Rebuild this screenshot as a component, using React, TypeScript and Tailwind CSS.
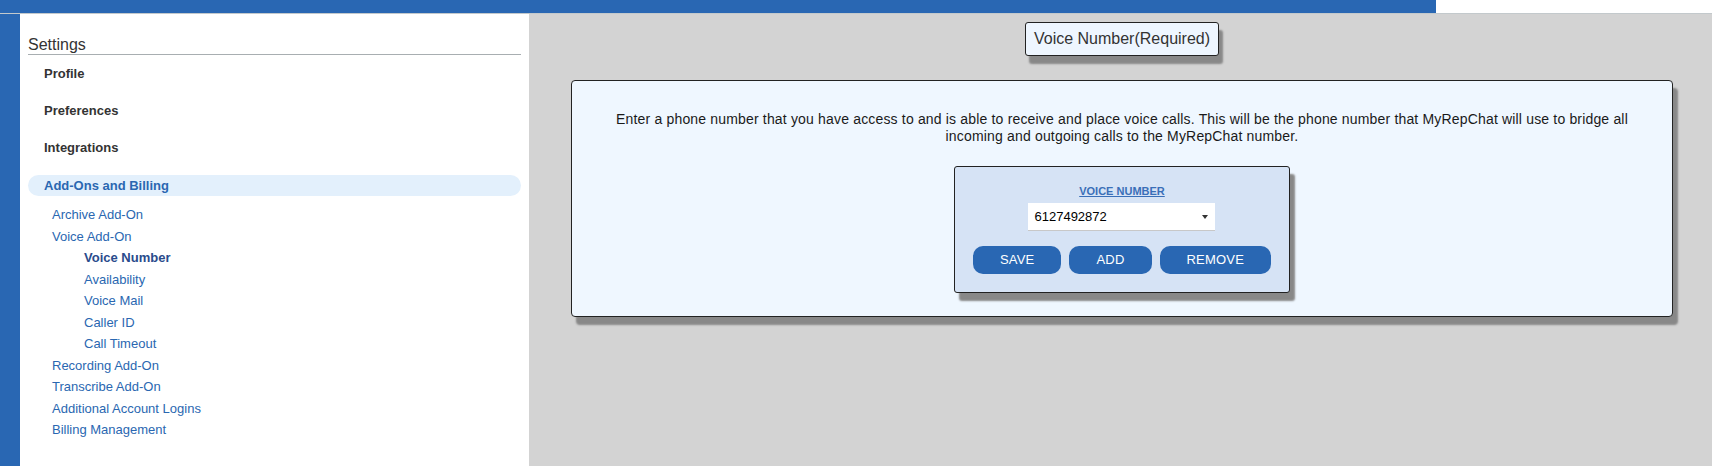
import React from 'react';

const topItems = ['Profile', 'Preferences', 'Integrations'];

const subItems: { label: string; level: number; active?: boolean }[] = [
  { label: 'Archive Add-On', level: 1 },
  { label: 'Voice Add-On', level: 1 },
  { label: 'Voice Number', level: 2, active: true },
  { label: 'Availability', level: 2 },
  { label: 'Voice Mail', level: 2 },
  { label: 'Caller ID', level: 2 },
  { label: 'Call Timeout', level: 2 },
  { label: 'Recording Add-On', level: 1 },
  { label: 'Transcribe Add-On', level: 1 },
  { label: 'Additional Account Logins', level: 1 },
  { label: 'Billing Management', level: 1 },
];

const Sidebar = () => (
  <aside className="w-[509px] shrink-0 bg-white px-[8px] pt-[22px]">
    <div className="text-[16px] leading-[18px] text-[#333] border-b border-[#a8aeb1]">Settings</div>
    <ul>
      {topItems.map((item) => (
        <li key={item} className="h-[37px] flex items-center pl-[16px] text-[13px] font-bold text-[#333]">
          {item}
        </li>
      ))}
      <li className="mt-[9px] h-[21px] flex items-center rounded-full bg-[#e3f0fc] pl-[16px] text-[13px] font-bold text-[#2a67b1]">
        Add-Ons and Billing
      </li>
    </ul>
    <ul className="mt-[8px]">
      {subItems.map(({ label, level, active }) => (
        <li
          key={label}
          className={
            'text-[13px] leading-[21.5px] ' +
            (level === 1 ? 'pl-[24px] ' : 'pl-[56px] ') +
            (active ? 'font-bold text-[#2a4b8c]' : 'text-[#2a67b1]')
          }
        >
          {label}
        </li>
      ))}
    </ul>
  </aside>
);

const VoiceNumberBox = () => (
  <div className="mt-[21px] inline-flex flex-col items-center border border-[#222] rounded-[3px] bg-[#d6e3f5] px-[18px] pt-[18px] pb-[18px] shadow-[5px_8px_2px_#888]">
    <span className="text-[11px] leading-[13px] font-bold text-[#3a6fb8] underline">VOICE NUMBER</span>
    <div className="mt-[5px] h-[28px] w-[187px] bg-white border-b border-[#c8c8c8] pl-[6px] pr-[7px] flex items-center justify-between text-[13px] text-black">
      <span>6127492872</span>
      <span className="w-0 h-0 border-x-[3.5px] border-t-[4px] border-x-transparent border-t-[#333]" />
    </div>
    <div className="mt-[15px] flex gap-[8px]">
      {['SAVE', 'ADD', 'REMOVE'].map((b) => (
        <button
          key={b}
          className="h-[28px] px-[27px] rounded-[10px] bg-[#2967b3] text-white text-[13px] tracking-[0.2px] leading-[28px]"
        >
          {b}
        </button>
      ))}
    </div>
  </div>
);

export default function App() {
  return (
    <div className="h-screen w-full flex flex-col bg-[#d3d3d3] font-['Liberation_Sans',Arial,sans-serif] overflow-hidden">
      <header className="h-[14px] shrink-0 flex border-b border-[#c3c9cc]">
        <div className="w-[1436px] bg-[#2967b3]" />
        <div className="flex-1 bg-white" />
      </header>
      <div className="flex flex-1">
        <div className="w-[20px] shrink-0 bg-[#2967b3]" />
        <Sidebar />
        <main className="flex-1 flex flex-col items-center pl-[42px] pr-[39px]">
          <div className="mt-[8px] h-[34px] flex items-center px-[8px] border border-[#222] rounded-[3px] bg-[#eef6ff] text-[16px] text-[#333] shadow-[4px_8px_2px_#888]">
            Voice Number(Required)
          </div>
          <section className="mt-[24px] w-full border border-[#222] rounded-[4px] bg-[#eff7ff] pt-[30px] pb-[23px] flex flex-col items-center shadow-[5px_8px_2px_#888]">
            <p className="px-[30px] text-center text-[14px] leading-[17px] tracking-[0.17px] text-[#1a1a1a]">
              Enter a phone number that you have access to and is able to receive and place voice calls. This will be the
              phone number that MyRepChat will use to bridge all incoming and outgoing calls to the MyRepChat number.
            </p>
            <VoiceNumberBox />
          </section>
        </main>
      </div>
    </div>
  );
}
